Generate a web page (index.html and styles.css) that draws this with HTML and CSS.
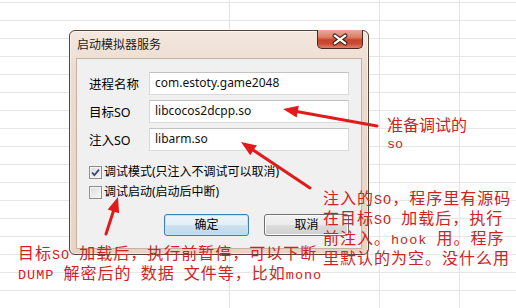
FILE: index.html
```html
<!DOCTYPE html>
<html lang="zh-CN">
<head>
    <meta charset="UTF-8">
    <title>启动模拟器服务</title>
    <link rel="stylesheet" href="styles.css">
</head>
<body>

    <div class="dialog">
        <div class="titlebar">
            <span class="title">启动模拟器服务</span>
            <div class="close">
                <svg width="46" height="19" viewBox="0 0 46 19">
                    <path d="M17.5 5.5 L28.5 13.5 M28.5 5.5 L17.5 13.5" stroke="#3b1d14" stroke-width="4.6" stroke-linecap="round"/>
                    <path d="M17.5 5.5 L28.5 13.5 M28.5 5.5 L17.5 13.5" stroke="#ffffff" stroke-width="2.4" stroke-linecap="round"/>
                </svg>
            </div>
        </div>
        <div class="client">
            <div class="fields">
                <label>进程名称</label>
                <div class="input">com.estoty.game2048</div>
                <label>目标SO</label>
                <div class="input">libcocos2dcpp.so</div>
                <label>注入SO</label>
                <div class="input">libarm.so</div>
            </div>
            <div class="checks">
                <div class="check-row">
                    <span class="box">
                        <svg width="11" height="11" viewBox="0 0 11 11"><path d="M2 5.5 L4.4 8.2 L9 2.6" fill="none" stroke="#33477a" stroke-width="1.8"/></svg>
                    </span>
                    调试模式(只注入不调试可以取消)
                </div>
                <div class="check-row">
                    <span class="box"></span>
                    调试启动(启动后中断)
                </div>
            </div>
            <div class="buttons">
                <button class="btn btn-default">确定</button>
                <button class="btn">取消</button>
            </div>
        </div>
    </div>

    <!-- annotation arrows -->
    <svg class="arrows" width="516" height="308" viewBox="0 0 516 308">
        <g stroke="#e01b1b" stroke-width="3" stroke-linecap="round">
            <line x1="377" y1="126" x2="298" y2="111.7"/>
            <line x1="310" y1="188" x2="253.5" y2="150.3"/>
            <line x1="106" y1="234" x2="113.4" y2="211.3"/>
        </g>
        <g fill="#e01b1b">
            <polygon points="283,109 298.8,105.8 296.7,117.6"/>
            <polygon points="241,142 256.8,145.3 250.2,155.3"/>
            <polygon points="118,197 119.1,213.2 107.7,209.5"/>
        </g>
    </svg>

    <div class="note note-a">准备调试的<br><span class="en">so</span></div>
    <div class="note note-b">注入的<span class="en">SO</span>，程序里有源码<br>在目标<span class="en">SO </span>加载后，执行<br>前注入。<span class="en">hook </span>用。程序<br>里默认的为空。没什么用</div>
    <div class="note note-c">目标<span class="en">SO </span>加载后，执行前暂停，可以下断<br><span class="en">DUMP </span>解密后的<span class="en"> </span>数据<span class="en"> </span>文件等，比如<span class="en">mono</span></div>

</body>
</html>
```

FILE: styles.css
```css
html, body {
    margin: 0;
    width: 516px;
    height: 308px;
    overflow: hidden;
}
body {
    position: relative;
    font-family: "Noto Sans", "Noto Sans CJK SC", sans-serif;
    font-size: 12px;
    color: #000;
    background-color: #fff;
    background-image:
        linear-gradient(to right, transparent 229px, #e4e4e4 229px, #e4e4e4 230px, transparent 230px),
        linear-gradient(to right, transparent 379px, #e4e4e4 379px, #e4e4e4 380px, transparent 380px),
        linear-gradient(to right, transparent 459px, #e4e4e4 459px, #e4e4e4 460px, transparent 460px),
        repeating-linear-gradient(to bottom, transparent 0, transparent 2px, #e6e6e6 2px, #e6e6e6 3px, transparent 3px, transparent 18px);
}

/* window */
.dialog {
    position: absolute;
    left: 69px;
    top: 30px;
    width: 300px;
    height: 225px;
    box-sizing: border-box;
    border: 1px solid #54443b;
    border-radius: 6px;
    padding: 0 6px 5px 6px;
    display: flex;
    flex-direction: column;
    background: linear-gradient(to bottom, #f3e8df 0, #ecdbcf 40px, #ead3c3 100%);
    box-shadow: inset 0 0 0 1px rgba(255, 255, 255, 0.55);
}
.titlebar {
    position: relative;
    height: 27px;
    display: flex;
    align-items: center;
    padding-left: 1px;
}
.title {
    font-size: 12px;
    line-height: 14px;
    color: #1c1c1c;
}
.close {
    position: absolute;
    top: -1px;
    right: -1px;
    width: 46px;
    height: 19px;
    box-sizing: border-box;
    border: 1px solid #4a261c;
    border-top: none;
    border-radius: 0 0 5px 5px;
    background: linear-gradient(to bottom, #e9ab9c 0, #dc7e68 40%, #c6442a 55%, #c94a30 75%, #e0806a 100%);
    display: flex;
}
.client {
    flex: 1;
    box-sizing: border-box;
    border: 1px solid #c5b1a3;
    background: #f0f0f0;
    padding: 13px 12px 0 12px;
    display: flex;
    flex-direction: column;
}

/* fields */
.fields {
    display: grid;
    grid-template-columns: 60px 200px;
    grid-auto-rows: 23px;
    row-gap: 5px;
    align-items: center;
}
.fields label {
    font-size: 12.5px;
    line-height: 16px;
    padding-top: 2px;
}
.input {
    height: 23px;
    box-sizing: border-box;
    border: 1px solid #d9d9d9;
    border-top-color: #c3c3c3;
    background: #fff;
    padding-left: 5px;
    line-height: 20px;
    font-size: 12px;
    color: #111;
}

/* checkboxes */
.checks {
    margin-top: 11px;
}
.check-row {
    height: 20px;
    display: flex;
    align-items: center;
    gap: 2px;
    font-size: 12px;
    line-height: 14px;
}
.box {
    width: 13px;
    height: 13px;
    box-sizing: border-box;
    border: 1px solid #8e8f8f;
    background: linear-gradient(135deg, #dcdcdc 0, #f7f7f7 100%);
    box-shadow: inset 0 0 0 1px #f4f4f4;
    display: flex;
    align-items: center;
    justify-content: center;
}

/* buttons */
.buttons {
    margin-top: 12px;
    display: flex;
    justify-content: flex-end;
    gap: 15px;
}
.btn {
    width: 85px;
    height: 22px;
    padding: 0;
    border: 1px solid #707070;
    border-radius: 3px;
    background: linear-gradient(to bottom, #f2f2f2 0, #ebebeb 50%, #dddddd 50%, #cfcfcf 100%);
    box-shadow: inset 0 0 0 1px #fcfcfc;
    font-family: "Noto Sans", "Noto Sans CJK SC", sans-serif;
    font-size: 12px;
    line-height: 18px;
    color: #000;
}
.btn-default {
    border-color: #3c7fb1;
    box-shadow: inset 0 0 0 1px #bde6f8;
    background: linear-gradient(to bottom, #edf5fa 0, #e3eef6 50%, #cfe2ef 50%, #c0d8e9 100%);
}

/* red annotations */
.arrows {
    position: absolute;
    left: 0;
    top: 0;
}
.note {
    position: absolute;
    font-family: "Noto Sans CJK SC", sans-serif;
    font-size: 16px;
    line-height: 17px;
    color: #cd2323;
    white-space: nowrap;
}
.note .en {
    font-family: "Liberation Mono", monospace;
    font-size: 13.5px;
}
.note-a {
    left: 387px;
    top: 116px;
}
.note-b {
    left: 323px;
    top: 189px;
    letter-spacing: 1px;
}
.note-c {
    left: 18px;
    top: 244px;
    letter-spacing: 1px;
}
```
